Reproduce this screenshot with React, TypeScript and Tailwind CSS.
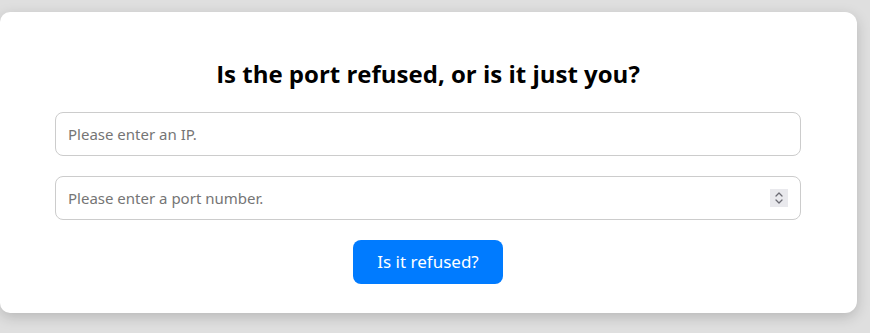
import React from "react";

const uiFont = { fontFamily: '"Noto Sans", "Open Sans", sans-serif' };

export default function App() {
  return (
    <div className="min-h-[333px] w-[870px] bg-[#dfdfdf] pt-3">
      <div className="w-[857px] rounded-r-xl rounded-l-[10px] bg-white pl-[55px] pr-[56px] pt-[46px] pb-[29px] shadow-[0_4px_14px_rgba(0,0,0,0.18)]">
        <h1
          className="text-center text-[24px] font-bold leading-[32px] text-black"
          style={{ fontFamily: '"Open Sans", sans-serif' }}
        >
          Is the port refused, or is it just you?
        </h1>

        {/* inputs */}
        <div className="mt-[22px] flex flex-col gap-5">
          <input
            type="text"
            placeholder="Please enter an IP."
            className="h-11 w-full rounded-lg border border-[#cccccc] px-[12px] text-[15px] text-[#333] outline-none placeholder:text-[#757575]"
            style={uiFont}
          />
          <div className="relative">
            <input
              type="text"
              placeholder="Please enter a port number."
              className="h-11 w-full rounded-lg border border-[#cccccc] px-[12px] text-[15px] text-[#333] outline-none placeholder:text-[#757575]"
              style={uiFont}
            />
            <div className="absolute top-[13px] right-[13px] flex h-[18px] w-[18px] items-center justify-center bg-[#e9e9ed]">
              <svg width="10" height="14" viewBox="0 0 10 14" fill="none" stroke="#6b6b73" strokeWidth="1.3" strokeLinecap="round" strokeLinejoin="round">
                <path d="M2 5 L5 2 L8 5" />
                <path d="M2 9 L5 12 L8 9" />
              </svg>
            </div>
          </div>
        </div>

        <div className="mt-5 flex justify-center">
          <button
            className="h-11 w-[150px] rounded-lg bg-[#007bff] text-[17px] text-white"
            style={uiFont}
          >
            Is it refused?
          </button>
        </div>
      </div>
    </div>
  );
}
